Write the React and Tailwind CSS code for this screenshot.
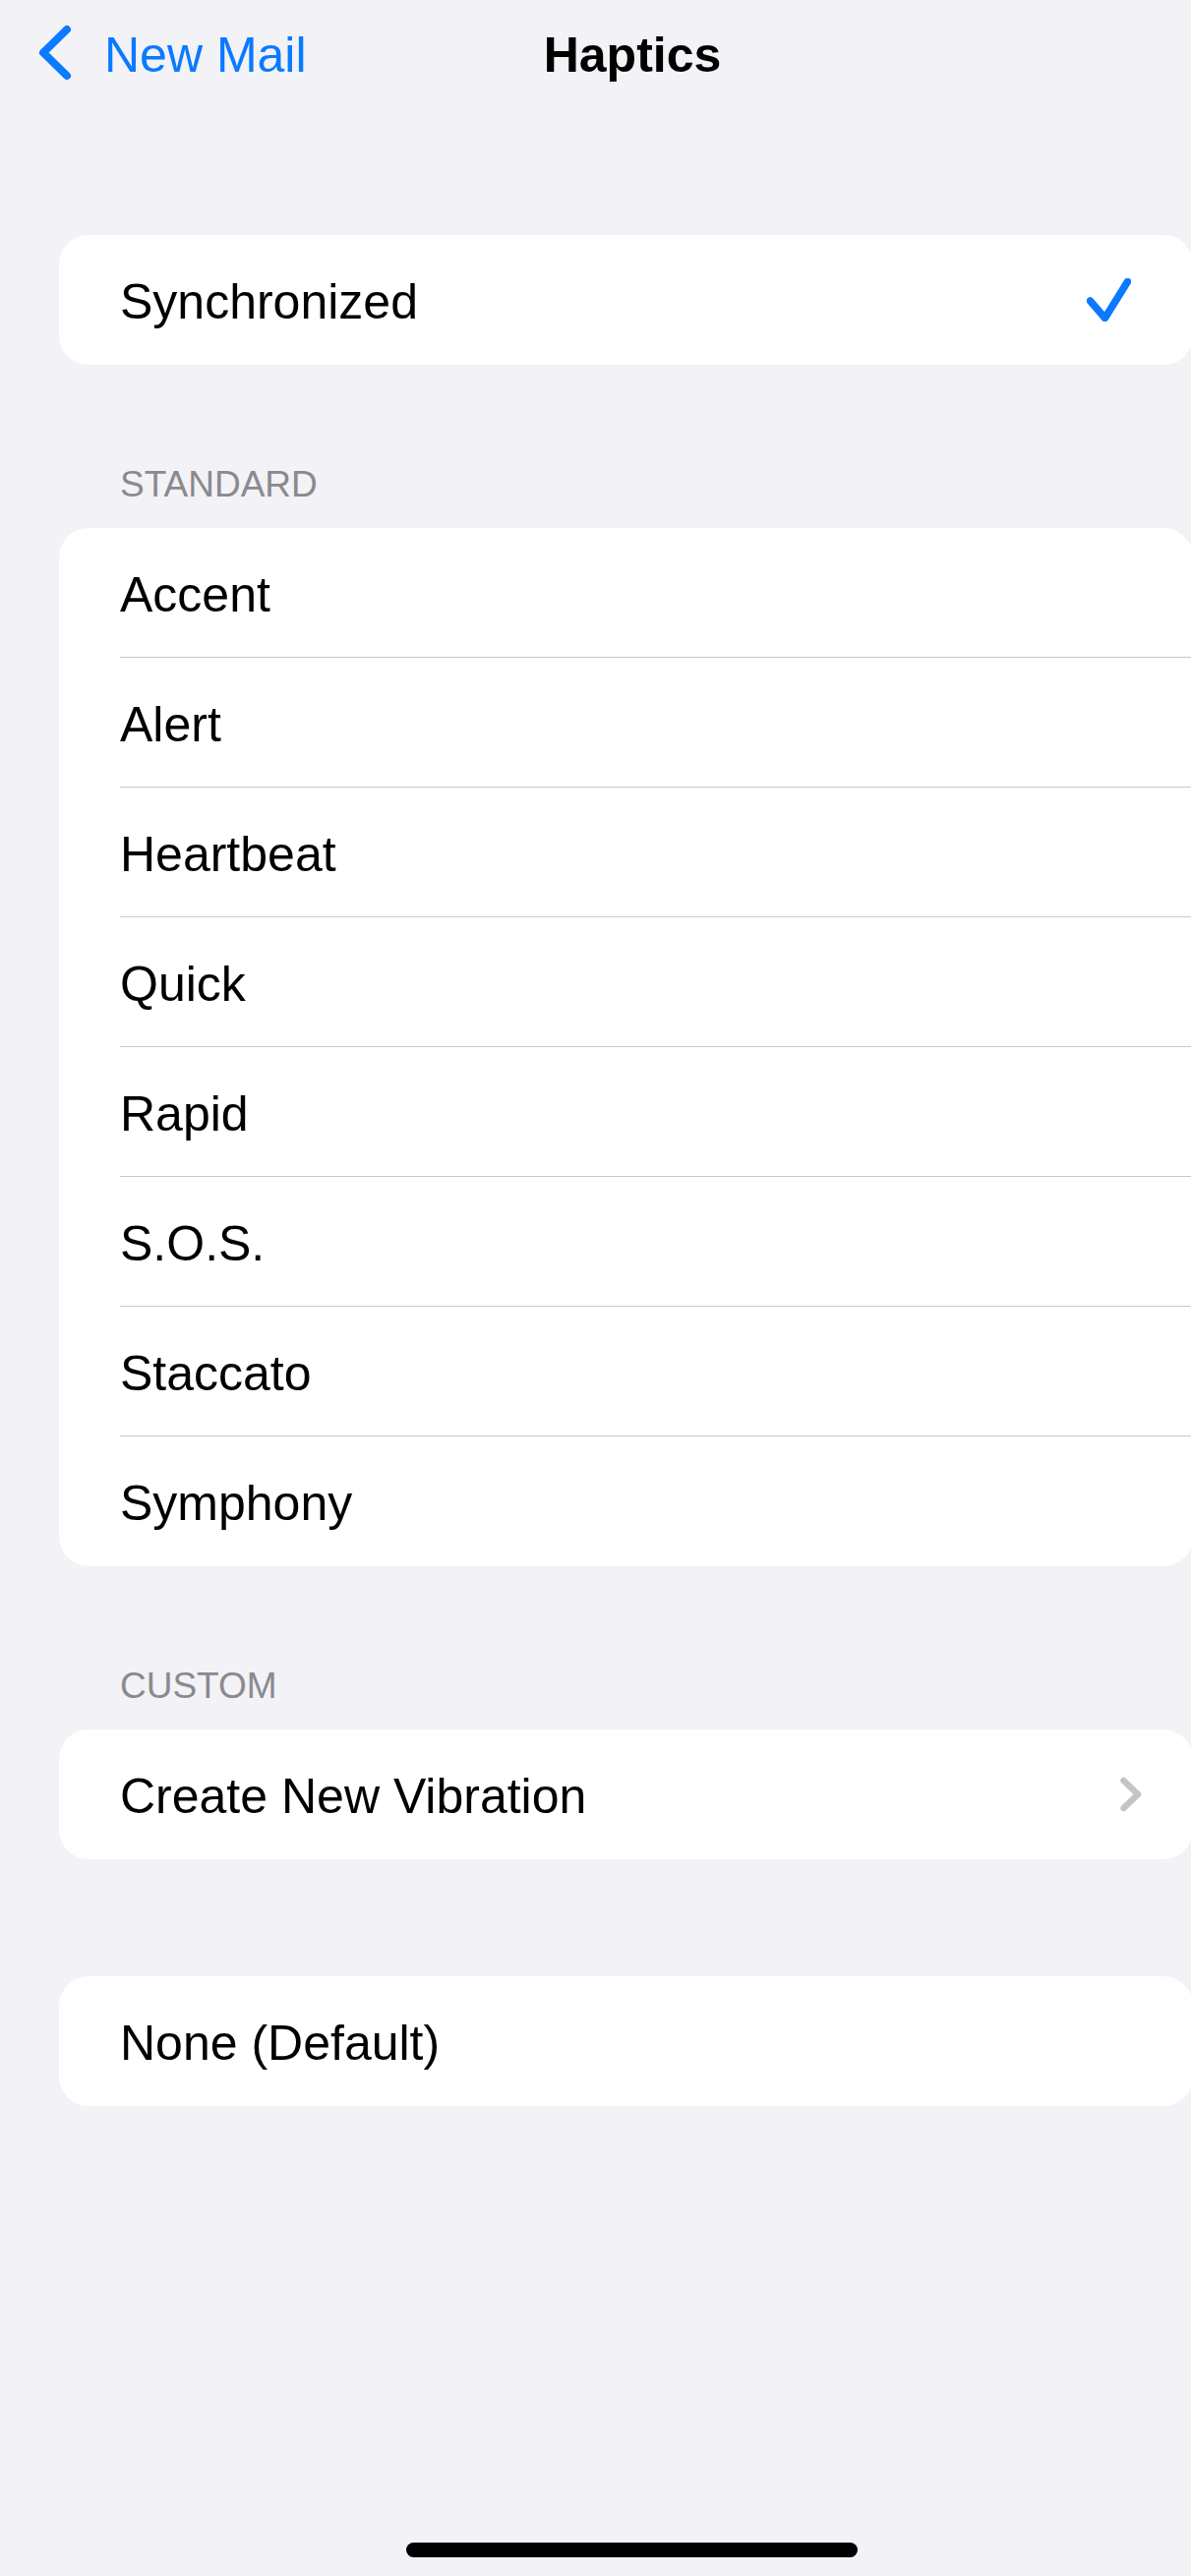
const STANDARD = [
  "Accent",
  "Alert",
  "Heartbeat",
  "Quick",
  "Rapid",
  "S.O.S.",
  "Staccato",
  "Symphony",
];

const font = { fontFamily: '"Liberation Sans", Arial, sans-serif' };

function Row({ label, last, children }) {
  return (
    <div className="pl-[62px] h-[132px]">
      <div
        className={`h-full flex items-center justify-between pr-[63px] ${last ? "" : "border-b border-[#c8c8cc]"}`}
      >
        <span className="pt-[4px] text-[50px] leading-[60px] text-black">{label}</span>
        {children}
      </div>
    </div>
  );
}

function Card({ children, className = "" }) {
  return (
    <div className={`ml-[60px] w-[1153px] bg-white rounded-[30px] overflow-hidden ${className}`}>
      {children}
    </div>
  );
}

function Header({ children }) {
  return (
    <div className="mt-[100px] mb-[22px] h-[44px] pl-[122px] text-[37px] leading-[44px] text-[#8a8a8e]">
      {children}
    </div>
  );
}

export default function App() {
  return (
    <div
      className="relative w-full min-h-[2620px] bg-[#f2f2f7] overflow-hidden"
      style={font}
    >
      {/* nav bar */}
      <div className="relative h-[108px] flex items-center">
        <svg
          width="40"
          height="64"
          viewBox="36 22 40 64"
          className="ml-[36px]"
        >
          <polyline
            points="68,30 44,53.5 68,77"
            fill="none"
            stroke="#0a7aff"
            strokeWidth="8"
            strokeLinecap="round"
            strokeLinejoin="round"
          />
        </svg>
        <span className="ml-[30px] pt-[4px] text-[50px] leading-[60px] text-[#0a7aff]">
          New Mail
        </span>
        <div className="absolute inset-y-0 left-0 w-[1286px] flex items-center justify-center pointer-events-none">
          <span className="pt-[4px] text-[50px] leading-[60px] font-bold text-black">
            Haptics
          </span>
        </div>
      </div>

      <Card className="mt-[131px]">
        <Row label="Synchronized" last>
          <svg width="45" height="44" viewBox="1105 283 45 44">
            <polyline
              points="1108.5,306 1123.5,323.5 1146.5,286.5"
              fill="none"
              stroke="#0a7aff"
              strokeWidth="7.5"
              strokeLinecap="round"
              strokeLinejoin="round"
            />
          </svg>
        </Row>
      </Card>

      <Header>STANDARD</Header>
      <Card>
        {STANDARD.map((s, i) => (
          <Row key={s} label={s} last={i === STANDARD.length - 1} />
        ))}
      </Card>

      <Header>CUSTOM</Header>
      <Card>
        <Row label="Create New Vibration" last>
          <svg width="24" height="36" viewBox="1140 1807 24 36" className="mr-[-12px]">
            <polyline
              points="1144.5,1811 1159,1825 1144.5,1839"
              fill="none"
              stroke="#c4c4c7"
              strokeWidth="6.5"
              strokeLinecap="round"
              strokeLinejoin="round"
            />
          </svg>
        </Row>
      </Card>

      <Card className="mt-[119px]">
        <Row label="None (Default)" last />
      </Card>

      {/* home indicator */}
      <div className="absolute left-[413px] bottom-[19px] w-[459px] h-[15px] rounded-full bg-black" />
    </div>
  );
}
